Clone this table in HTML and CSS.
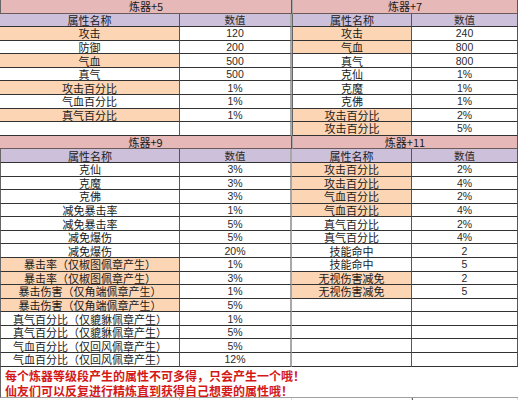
FILE: index.html
```html
<!DOCTYPE html>
<html lang="zh">
<head>
<meta charset="utf-8">
<link rel="stylesheet" href="styles.css">
</head>
<body>
<div class="sheet">
  <div class="c t">炼器+5</div><div class="c t tr">炼器+7</div>
  <div class="c h">属性名称</div><div class="c h v l">数值</div><div class="c h">属性名称</div><div class="c h v">数值</div>

  <div class="c o">攻击</div><div class="c v l">120</div><div class="c o">攻击</div><div class="c v">240</div>
  <div class="c">防御</div><div class="c v l">200</div><div class="c o">气血</div><div class="c v">800</div>
  <div class="c o">气血</div><div class="c v l">500</div><div class="c">真气</div><div class="c v">800</div>
  <div class="c">真气</div><div class="c v l">500</div><div class="c">克仙</div><div class="c v">1%</div>
  <div class="c o">攻击百分比</div><div class="c v l">1%</div><div class="c">克魔</div><div class="c v">1%</div>
  <div class="c">气血百分比</div><div class="c v l">1%</div><div class="c">克佛</div><div class="c v">1%</div>
  <div class="c o">真气百分比</div><div class="c v l">1%</div><div class="c o">攻击百分比</div><div class="c v">2%</div>
  <div class="c"></div><div class="c v l"></div><div class="c o">攻击百分比</div><div class="c v">5%</div>

  <div class="c t">炼器+9</div><div class="c t tr">炼器+11</div>
  <div class="c h">属性名称</div><div class="c h v l">数值</div><div class="c h">属性名称</div><div class="c h v">数值</div>

  <div class="c">克仙</div><div class="c v l">3%</div><div class="c o">攻击百分比</div><div class="c v">2%</div>
  <div class="c">克魔</div><div class="c v l">3%</div><div class="c o">攻击百分比</div><div class="c v">4%</div>
  <div class="c">克佛</div><div class="c v l">3%</div><div class="c o">气血百分比</div><div class="c v">2%</div>
  <div class="c">减免暴击率</div><div class="c v l">1%</div><div class="c o">气血百分比</div><div class="c v">4%</div>
  <div class="c">减免暴击率</div><div class="c v l">5%</div><div class="c">真气百分比</div><div class="c v">2%</div>
  <div class="c">减免爆伤</div><div class="c v l">5%</div><div class="c">真气百分比</div><div class="c v">4%</div>
  <div class="c">减免爆伤</div><div class="c v l">20%</div><div class="c">技能命中</div><div class="c v">2</div>
  <div class="c o">暴击率（仅椒图佩章产生）</div><div class="c v l">1%</div><div class="c">技能命中</div><div class="c v">5</div>
  <div class="c o">暴击率（仅椒图佩章产生）</div><div class="c v l">3%</div><div class="c o">无视伤害减免</div><div class="c v">2</div>
  <div class="c o">暴击伤害（仅角端佩章产生）</div><div class="c v l">1%</div><div class="c o">无视伤害减免</div><div class="c v">5</div>
  <div class="c o">暴击伤害（仅角端佩章产生）</div><div class="c v l">5%</div><div class="c"></div><div class="c v"></div>
  <div class="c">真气百分比（仅貔貅佩章产生）</div><div class="c v l">1%</div><div class="c"></div><div class="c v"></div>
  <div class="c">真气百分比（仅貔貅佩章产生）</div><div class="c v l">5%</div><div class="c"></div><div class="c v"></div>
  <div class="c">气血百分比（仅回风佩章产生）</div><div class="c v l">5%</div><div class="c"></div><div class="c v"></div>
  <div class="c">气血百分比（仅回风佩章产生）</div><div class="c v l">12%</div><div class="c"></div><div class="c v"></div>

  <div class="note">
    <p>每个炼器等级段产生的属性不可多得，只会产生一个哦！</p>
    <p>仙友们可以反复进行精炼直到获得自己想要的属性哦！</p>
  </div>
  <div class="c e"></div><div class="c e"></div><div class="c e"></div><div class="c e"></div>
</div>
</body>
</html>
```
FILE: styles.css
```css
html, body {
  margin: 0;
  padding: 0;
  background: #ffffff;
}

.sheet {
  width: 518px;
  height: 400px;
  overflow: hidden;
  display: grid;
  grid-template-columns: 180px 112px 120px 106px;
  grid-template-rows: repeat(27, 13.58px) 31px 1fr;
  font-family: "Noto Sans CJK SC", "Liberation Sans", sans-serif;
  font-size: 11px;
  color: #1a1a1a;
}

.c {
  box-sizing: border-box;
  border-right: 1px solid #555;
  border-bottom: 1px solid #333;
  display: flex;
  align-items: center;
  justify-content: center;
  line-height: 12px;
  white-space: nowrap;
  background: #ffffff;
}

.c:nth-child(4n+1) {
  border-left: 1px solid #666;
}

.v {
  font-family: "Liberation Sans", "Noto Sans CJK SC", sans-serif;
  font-size: 10.5px;
  color: #2a2a2a;
}

.l {
  border-right: 2px solid #a8a8a8;
}

.t {
  grid-column: span 2;
  background: #e6b8b7;
  border-bottom: 1px solid #6a5a5a;
}

.tr {
  border-left: 1px solid #a8a8a8;
}

.h {
  background: #ccc0da;
}

.o {
  background: #fcd5b4;
}

.note {
  grid-column: 1 / -1;
  box-sizing: border-box;
  border-left: 1px solid #666;
  border-bottom: 1px solid #a0a0a0;
  padding: 1px 0 0 4px;
  color: #d41818;
  font-weight: 700;
  font-size: 12px;
  line-height: 15px;
}

.note p {
  margin: 0;
  white-space: nowrap;
}

.e {
  border-right: 1px solid #dddddd;
  border-bottom: none;
}
```
